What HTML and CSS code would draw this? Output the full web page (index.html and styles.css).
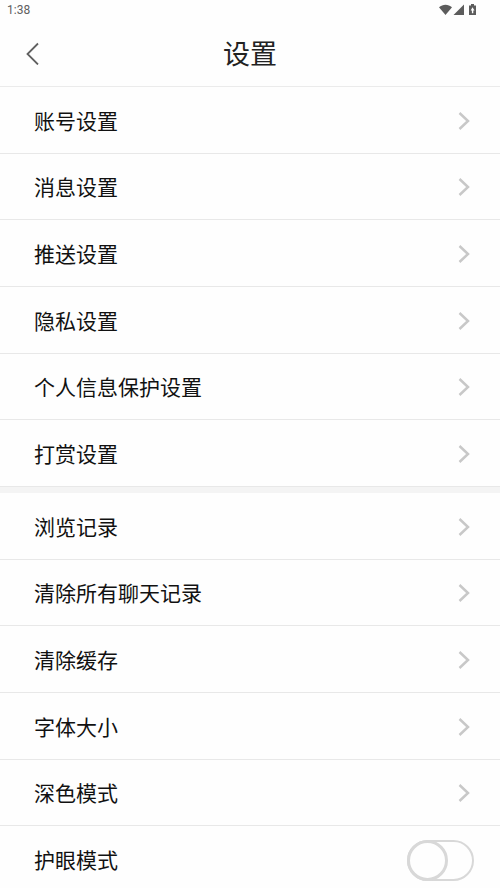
FILE: index.html
```html
<!DOCTYPE html>
<html lang="zh-CN">
<head>
<meta charset="utf-8">
<meta name="viewport" content="width=device-width, initial-scale=1">
<title>设置</title>
<link rel="stylesheet" href="styles.css">
</head>
<body>
<svg class="defs" aria-hidden="true">
  <symbol id="chevron" viewBox="0 0 12 20"><path d="M1.500 2 10 10 1.500 18" fill="none" stroke="currentColor" stroke-width="2.500"/></symbol>
</svg>
<div class="app">
  <div class="status">
    <span>1:38</span>
    <svg class="status-icons" viewBox="0 0 40 14" aria-hidden="true">
      <path d="M0 4.200C3.700.8 9.300.8 13 4.200L6.500 12Z"/>
      <path d="M25 1.500V12H14.500Z"/>
      <path fill-rule="evenodd" d="M32 1h3v1.500h2V12h-7V2.500h2ZM33.500 4.200 31.700 7.500h1.200v2.800h1.400V7.500h1.200Z"/>
    </svg>
  </div>
  <header class="header">
    <button class="back" type="button" aria-label="返回">
      <svg viewBox="0 0 14 24" aria-hidden="true"><path d="M12 2.500 1.500 13 12 23.500" fill="none" stroke="currentColor" stroke-width="1.800"/></svg>
    </button>
    <h1>设置</h1>
  </header>
  <main>
    <nav class="group">
      <a class="row" href="#account">账号设置<svg class="chevron" aria-hidden="true"><use href="#chevron"/></svg></a>
      <a class="row" href="#message">消息设置<svg class="chevron" aria-hidden="true"><use href="#chevron"/></svg></a>
      <a class="row" href="#push">推送设置<svg class="chevron" aria-hidden="true"><use href="#chevron"/></svg></a>
      <a class="row" href="#privacy">隐私设置<svg class="chevron" aria-hidden="true"><use href="#chevron"/></svg></a>
      <a class="row" href="#personal">个人信息保护设置<svg class="chevron" aria-hidden="true"><use href="#chevron"/></svg></a>
      <a class="row" href="#reward">打赏设置<svg class="chevron" aria-hidden="true"><use href="#chevron"/></svg></a>
    </nav>
    <div class="group">
      <a class="row" href="#history">浏览记录<svg class="chevron" aria-hidden="true"><use href="#chevron"/></svg></a>
      <a class="row" href="#chats">清除所有聊天记录<svg class="chevron" aria-hidden="true"><use href="#chevron"/></svg></a>
      <a class="row" href="#cache">清除缓存<svg class="chevron" aria-hidden="true"><use href="#chevron"/></svg></a>
      <a class="row" href="#font">字体大小<svg class="chevron" aria-hidden="true"><use href="#chevron"/></svg></a>
      <a class="row" href="#dark">深色模式<svg class="chevron" aria-hidden="true"><use href="#chevron"/></svg></a>
      <div class="row"><label for="eye">护眼模式</label><input class="switch" id="eye" type="checkbox" role="switch"></div>
    </div>
  </main>
</div>
</body>
</html>
```
FILE: styles.css
```css
*,
*::before {
  box-sizing: border-box;
}

body {
  margin: 0;
  background: #fefefe;
  color: #111;
  font-family: "Noto Sans CJK SC", sans-serif;
}

.defs {
  position: absolute;
  width: 0;
  height: 0;
}

.app {
  height: 100vh;
  overflow-y: auto;
  scrollbar-width: none;
}

.status {
  display: flex;
  align-items: center;
  justify-content: space-between;
  height: 20px;
  padding: 0 21px 0 7px;
  color: #606060;
  font: 12px/20px Roboto, sans-serif;
}

.status-icons {
  width: 40px;
  height: 14px;
  fill: #5c5c5c;
}

.header {
  display: grid;
  grid-template-columns: 64px 1fr 64px;
  align-items: center;
  height: 67px;
  border-bottom: 1px solid #ebebeb;
}

.header h1 {
  margin: 0;
  color: #222;
  font-size: 27px;
  font-weight: 400;
  line-height: 40px;
  text-align: center;
}

.back {
  display: flex;
  align-items: center;
  height: 48px;
  padding: 0 0 0 26px;
  border: 0;
  background: none;
  color: #606060;
}

.back svg {
  width: 14px;
  height: 24px;
}

.group {
  display: grid;
  grid-auto-rows: 1fr;
  min-height: 400px;
}

.group + .group {
  border-top: 6px solid #f4f4f4;
  min-height: 406px;
}

.row {
  display: flex;
  align-items: center;
  justify-content: space-between;
  padding: 0 30px 0 34px;
  border-bottom: 1px solid #e8e8e8;
  color: inherit;
  font-size: 21px;
  line-height: 32px;
  text-decoration: none;
}

.chevron {
  width: 12px;
  height: 20px;
  margin-top: 2px;
  color: #c8c8c8;
}

.switch {
  appearance: none;
  width: 67px;
  height: 41px;
  margin: 2px -4px 0 0;
  border: 2px solid #d8d8d8;
  border-radius: 21px;
}

.switch::before {
  content: "";
  display: block;
  width: 41px;
  height: 41px;
  margin: -2px;
  border: 3px solid #d8d8d8;
  border-radius: 50%;
}

.switch:checked::before {
  margin-left: 24px;
}
```
